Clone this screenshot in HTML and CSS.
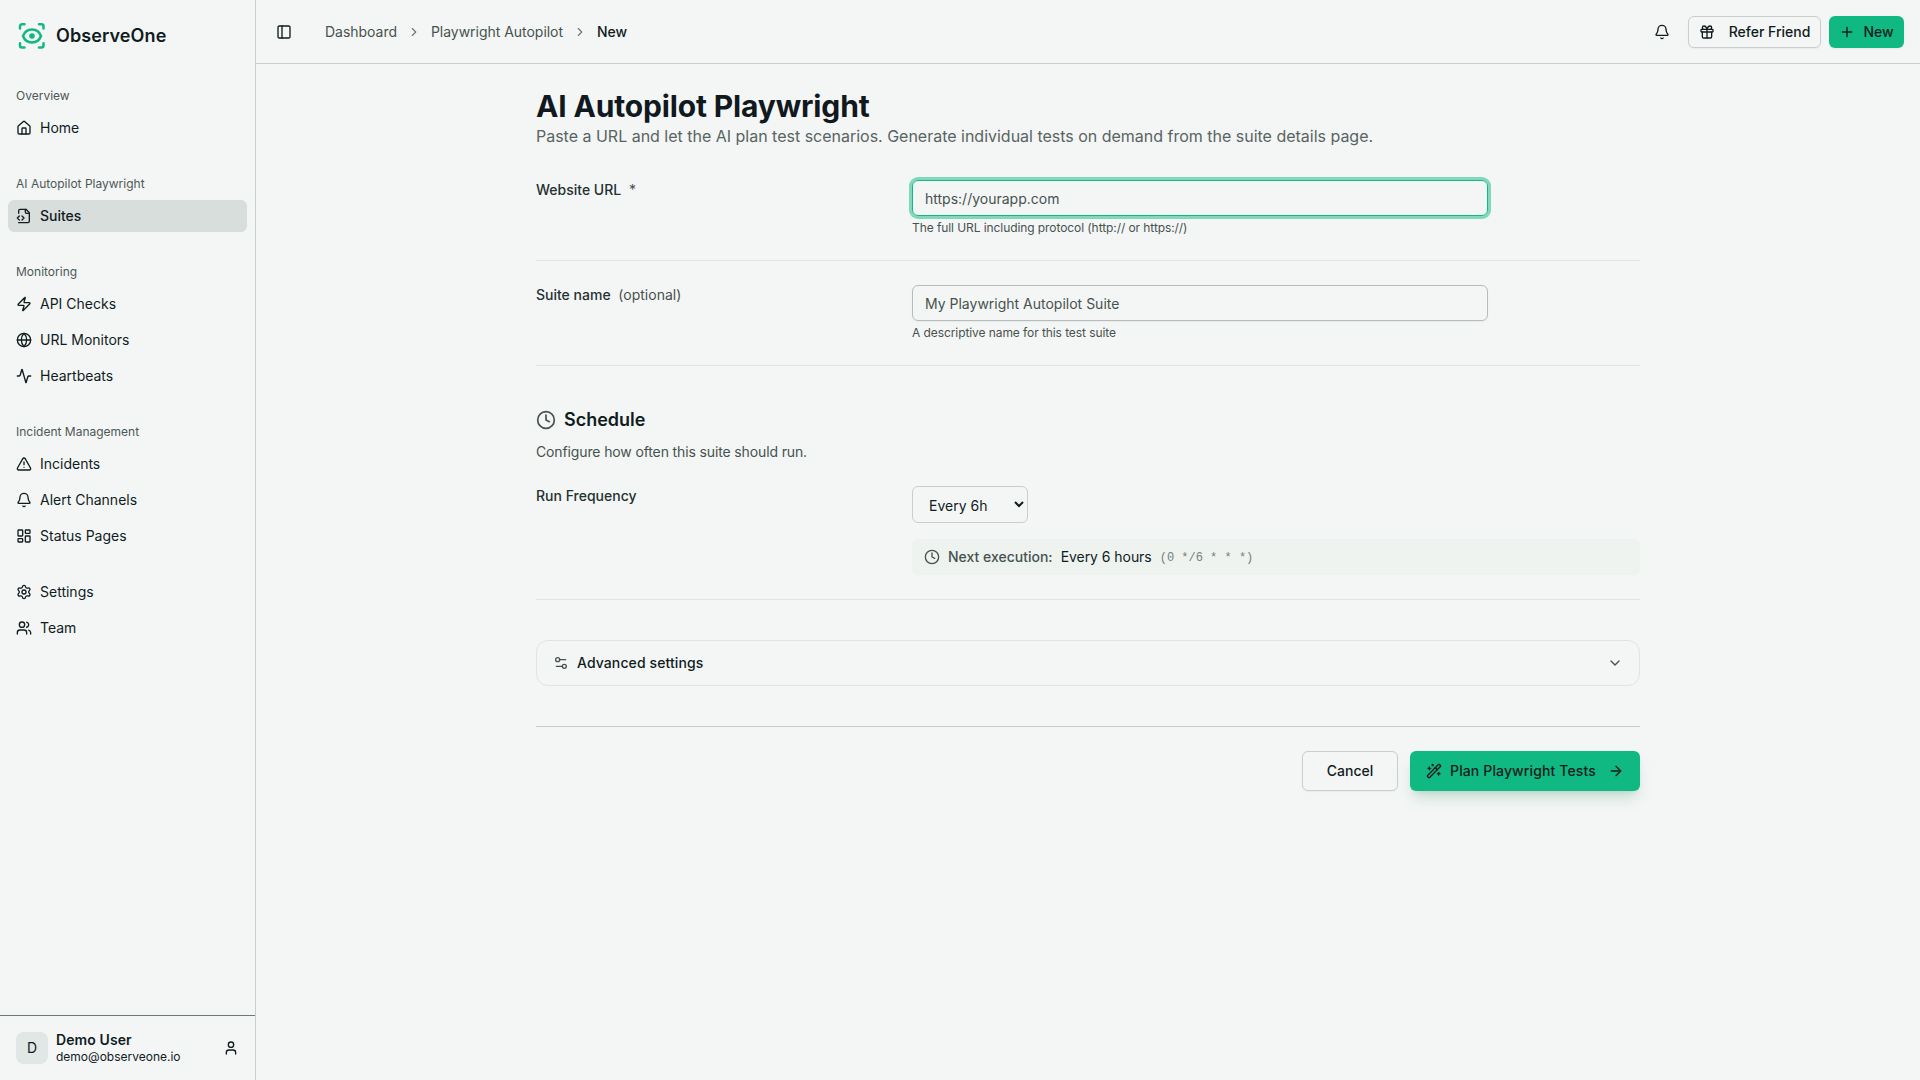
FILE: index.html
```html
<!DOCTYPE html>
<html lang="en">
<head>
  <meta charset="UTF-8" />
  <meta name="viewport" content="width=device-width, initial-scale=1.0"/>
  <title>New Playwright Autopilot Suite - ObserveOne</title>
  <link rel="stylesheet" href="styles.css">
</head>
<body>

  <div class="wrapper">
    <!-- Sidebar -->
    <aside class="sidebar">
      <a class="brand" href="#">
        <svg class="brand-logo" viewBox="0 0 32 32">
          <path d="M4 8.500V6.200a2 2 0 0 1 2-2h2.500M23 4.200h2.500a2 2 0 0 1 2 2v2.300M27.500 23.200v2.300a2 2 0 0 1-2 2H23M8.500 27.500H6a2 2 0 0 1-2-2v-2.300"/>
          <path d="M7 16c1.500-4 5-6.500 9-6.500s7.500 2.500 9 6.500c-1.500 4-5 6.500-9 6.500s-7.500-2.500-9-6.500z"/>
          <circle class="pupil" cx="16" cy="16" r="2.800"/>
        </svg>
        <span>ObserveOne</span>
      </a>

      <nav class="menu">
        <div class="group">
          <div class="group-label">Overview</div>
          <a class="item" href="#">
            <svg class="icon" viewBox="0 0 24 24"><path d="M15 21v-8a1 1 0 0 0-1-1h-4a1 1 0 0 0-1 1v8"/><path d="M3 10a2 2 0 0 1 .709-1.528l7-5.999a2 2 0 0 1 2.582 0l7 5.999A2 2 0 0 1 21 10v9a2 2 0 0 1-2 2H5a2 2 0 0 1-2-2z"/></svg>
            <span>Home</span>
          </a>
        </div>

        <div class="group">
          <div class="group-label">AI Autopilot Playwright</div>
          <a class="item active" href="#">
            <svg class="icon" viewBox="0 0 24 24"><path d="M4 22h14a2 2 0 0 0 2-2V7l-5-5H6a2 2 0 0 0-2 2v4"/><path d="M14 2v4a2 2 0 0 0 2 2h4"/><path d="m5 12-3 3 3 3"/><path d="m9 18 3-3-3-3"/></svg>
            <span>Suites</span>
          </a>
        </div>

        <div class="group">
          <div class="group-label">Monitoring</div>
          <a class="item" href="#">
            <svg class="icon" viewBox="0 0 24 24"><path d="M4 14a1 1 0 0 1-.78-1.630l9.900-10.200a.5.5 0 0 1 .86.460l-1.920 6.020A1 1 0 0 0 13 10h7a1 1 0 0 1 .78 1.630l-9.900 10.200a.5.5 0 0 1-.86-.460l1.920-6.020A1 1 0 0 0 11 14z"/></svg>
            <span>API Checks</span>
          </a>
          <a class="item" href="#">
            <svg class="icon" viewBox="0 0 24 24"><circle cx="12" cy="12" r="10"/><path d="M12 2a14.500 14.500 0 0 0 0 20 14.500 14.500 0 0 0 0-20"/><path d="M2 12h20"/></svg>
            <span>URL Monitors</span>
          </a>
          <a class="item" href="#">
            <svg class="icon" viewBox="0 0 24 24"><path d="M22 12h-2.480a2 2 0 0 0-1.930 1.460l-2.350 8.360a.25.25 0 0 1-.48 0L9.240 2.180a.25.25 0 0 0-.48 0l-2.350 8.360A2 2 0 0 1 4.490 12H2"/></svg>
            <span>Heartbeats</span>
          </a>
        </div>

        <div class="group">
          <div class="group-label">Incident Management</div>
          <a class="item" href="#">
            <svg class="icon" viewBox="0 0 24 24"><path d="m21.730 18-8-14a2 2 0 0 0-3.480 0l-8 14A2 2 0 0 0 4 21h16a2 2 0 0 0 1.730-3"/><path d="M12 9v4"/><path d="M12 17h.01"/></svg>
            <span>Incidents</span>
          </a>
          <a class="item" href="#">
            <svg class="icon" viewBox="0 0 24 24"><path d="M10.268 21a2 2 0 0 0 3.464 0"/><path d="M3.262 15.326A1 1 0 0 0 4 17h16a1 1 0 0 0 .74-1.673C19.410 13.956 18 12.499 18 8A6 6 0 0 0 6 8c0 4.499-1.411 5.956-2.738 7.326"/></svg>
            <span>Alert Channels</span>
          </a>
          <a class="item" href="#">
            <svg class="icon" viewBox="0 0 24 24"><rect width="7" height="9" x="3" y="3" rx="1"/><rect width="7" height="5" x="14" y="3" rx="1"/><rect width="7" height="9" x="14" y="12" rx="1"/><rect width="7" height="5" x="3" y="16" rx="1"/></svg>
            <span>Status Pages</span>
          </a>
        </div>

        <div class="group">
          <a class="item" href="#">
            <svg class="icon" viewBox="0 0 24 24"><path d="M9.671 4.136a2.340 2.340 0 0 1 4.659 0 2.340 2.340 0 0 0 3.319 1.915 2.340 2.340 0 0 1 2.330 4.033 2.340 2.340 0 0 0 0 3.831 2.340 2.340 0 0 1-2.330 4.033 2.340 2.340 0 0 0-3.319 1.915 2.340 2.340 0 0 1-4.659 0 2.340 2.340 0 0 0-3.320-1.915 2.340 2.340 0 0 1-2.330-4.033 2.340 2.340 0 0 0 0-3.831A2.340 2.340 0 0 1 6.350 6.051a2.340 2.340 0 0 0 3.319-1.915"/><circle cx="12" cy="12" r="3"/></svg>
            <span>Settings</span>
          </a>
          <a class="item" href="#">
            <svg class="icon" viewBox="0 0 24 24"><path d="M16 21v-2a4 4 0 0 0-4-4H6a4 4 0 0 0-4 4v2"/><circle cx="9" cy="7" r="4"/><path d="M22 21v-2a4 4 0 0 0-3-3.870"/><path d="M16 3.130a4 4 0 0 1 0 7.750"/></svg>
            <span>Team</span>
          </a>
        </div>
      </nav>

      <div class="user">
        <div class="avatar">D</div>
        <div class="user-info">
          <span class="user-name">Demo User</span>
          <span class="user-email">demo@observeone.io</span>
        </div>
        <svg class="icon" viewBox="0 0 24 24"><path d="M19 21v-2a4 4 0 0 0-4-4H9a4 4 0 0 0-4 4v2"/><circle cx="12" cy="7" r="4"/></svg>
      </div>
    </aside>

    <!-- Page -->
    <div class="page">
      <header class="topbar">
        <button class="icon-btn">
          <svg class="icon" viewBox="0 0 24 24"><rect width="18" height="18" x="3" y="3" rx="2"/><path d="M9 3v18"/></svg>
        </button>
        <nav class="breadcrumb">
          <a href="#">Dashboard</a>
          <svg class="icon small" viewBox="0 0 24 24"><path d="m9 18 6-6-6-6"/></svg>
          <a href="#">Playwright Autopilot</a>
          <svg class="icon small" viewBox="0 0 24 24"><path d="m9 18 6-6-6-6"/></svg>
          <span class="current">New</span>
        </nav>
        <div class="actions">
          <button class="icon-btn">
            <svg class="icon" viewBox="0 0 24 24"><path d="M10.268 21a2 2 0 0 0 3.464 0"/><path d="M3.262 15.326A1 1 0 0 0 4 17h16a1 1 0 0 0 .74-1.673C19.410 13.956 18 12.499 18 8A6 6 0 0 0 6 8c0 4.499-1.411 5.956-2.738 7.326"/></svg>
          </button>
          <button class="btn refer">
            <svg class="icon" viewBox="0 0 24 24"><rect x="3" y="8" width="18" height="4" rx="1"/><path d="M12 8v13"/><path d="M19 12v7a2 2 0 0 1-2 2H7a2 2 0 0 1-2-2v-7"/><path d="M7.500 8a2.500 2.500 0 0 1 0-5A4.800 8 0 0 1 12 8a4.800 8 0 0 1 4.500-5 2.500 2.500 0 0 1 0 5"/></svg>
            Refer Friend
          </button>
          <button class="btn primary new">
            <svg class="icon" viewBox="0 0 24 24"><path d="M5 12h14"/><path d="M12 5v14"/></svg>
            New
          </button>
        </div>
      </header>

      <main class="container">
        <h1>AI Autopilot Playwright</h1>
        <p class="intro">Paste a URL and let the AI plan test scenarios. Generate individual tests on demand from the suite details page.</p>

        <form>
          <div class="row">
            <label for="url">Website URL <span class="note">*</span></label>
            <div class="field">
              <input class="focused" type="text" id="url" placeholder="https://yourapp.com">
              <p class="hint">The full URL including protocol (http:// or https://)</p>
            </div>
          </div>

          <div class="row">
            <label for="name">Suite name <span class="note">(optional)</span></label>
            <div class="field">
              <input type="text" id="name" placeholder="My Playwright Autopilot Suite">
              <p class="hint">A descriptive name for this test suite</p>
            </div>
          </div>

          <section class="schedule">
            <h2>
              <svg class="icon large" viewBox="0 0 24 24"><circle cx="12" cy="12" r="10"/><path d="M12 6v6l4 2"/></svg>
              Schedule
            </h2>
            <p class="section-text">Configure how often this suite should run.</p>
            <div class="row">
              <label for="frequency">Run Frequency</label>
              <div class="field">
                <select id="frequency">
                  <option>Every 6h</option>
                </select>
                <div class="next-run">
                  <svg class="icon" viewBox="0 0 24 24"><circle cx="12" cy="12" r="10"/><path d="M12 6v6l4 2"/></svg>
                  <span class="next-label">Next execution:</span>
                  <span class="next-value">Every 6 hours</span>
                  <code>(0 */6 * * *)</code>
                </div>
              </div>
            </div>
          </section>

          <button type="button" class="advanced">
            <svg class="icon" viewBox="0 0 24 24"><path d="M14 17H5"/><path d="M19 7h-9"/><circle cx="17" cy="17" r="3"/><circle cx="7" cy="7" r="3"/></svg>
            <span>Advanced settings</span>
            <svg class="icon chevron" viewBox="0 0 24 24"><path d="m6 9 6 6 6-6"/></svg>
          </button>

          <div class="form-footer">
            <button type="button" class="btn cancel">Cancel</button>
            <button type="button" class="btn primary submit">
              <svg class="icon" viewBox="0 0 24 24"><path d="m21.640 3.640-1.280-1.280a1.210 1.210 0 0 0-1.720 0L2.360 18.640a1.210 1.210 0 0 0 0 1.720l1.280 1.280a1.200 1.200 0 0 0 1.720 0L21.640 5.360a1.200 1.200 0 0 0 0-1.720"/><path d="m14 7 3 3"/><path d="M5 6v4"/><path d="M19 14v4"/><path d="M10 2v2"/><path d="M7 8H3"/><path d="M21 16h-4"/><path d="M11 3H9"/></svg>
              <span>Plan Playwright Tests</span>
              <svg class="icon" viewBox="0 0 24 24"><path d="M5 12h14"/><path d="m12 5 7 7-7 7"/></svg>
            </button>
          </div>
        </form>
      </main>
    </div>
  </div>

</body>
</html>
```

FILE: styles.css
```css
* {
  box-sizing: border-box;
}

html, body {
  margin: 0;
  padding: 0;
  height: 100%;
  font-family: Inter, sans-serif;
  font-size: 14px;
  line-height: 20px;
  color: #101c1e;
  background-color: #f4f6f5;
}

h1, h2, p {
  margin: 0;
}

a {
  color: inherit;
  text-decoration: none;
}

button, input, select {
  font: inherit;
  color: inherit;
}

.wrapper {
  display: flex;
  height: 100vh;
}

/* Icons */
.icon {
  width: 16px;
  height: 16px;
  flex-shrink: 0;
  fill: none;
  stroke: currentColor;
  stroke-width: 2;
  stroke-linecap: round;
  stroke-linejoin: round;
}
.icon.small {
  width: 14px;
  height: 14px;
}
.icon.large {
  width: 20px;
  height: 20px;
}

/* Sidebar */
.sidebar {
  display: flex;
  flex-direction: column;
  width: 256px;
  flex-shrink: 0;
  border-right: 1px solid #c8cecc;
}
.brand {
  display: flex;
  align-items: center;
  gap: 8px;
  height: 72px;
  padding: 0 16px;
  font-size: 18px;
  font-weight: 600;
  letter-spacing: 0.1px;
}
.brand-logo {
  width: 32px;
  height: 32px;
  fill: none;
  stroke: #10b981;
  stroke-width: 2.500;
  stroke-linecap: round;
}
.brand-logo .pupil {
  fill: #10b981;
  stroke: none;
}
.menu {
  display: flex;
  flex-direction: column;
  gap: 8px;
  flex: 1;
}
.group {
  display: flex;
  flex-direction: column;
  gap: 4px;
  padding: 8px;
}
.group-label {
  height: 32px;
  margin-bottom: -4px;
  padding: 0 8px;
  font-size: 12px;
  line-height: 32px;
  color: #4c5856;
}
.item {
  display: flex;
  align-items: center;
  gap: 8px;
  height: 32px;
  padding: 0 8px;
  border-radius: 6px;
}
.item.active {
  background-color: #d8dedb;
  font-weight: 500;
}
.user {
  display: flex;
  align-items: center;
  gap: 8px;
  height: 65px;
  padding: 0 16px;
  border-top: 1px solid #6b7a72;
}
.avatar {
  width: 32px;
  height: 32px;
  border-radius: 8px;
  background-color: #e0e7e4;
  line-height: 32px;
  text-align: center;
}
.user-info {
  display: flex;
  flex-direction: column;
  flex: 1;
}
.user-name {
  font-weight: 600;
  line-height: 18px;
  letter-spacing: 0.1px;
}
.user-email {
  font-size: 12px;
  line-height: 16px;
}

/* Top bar */
.page {
  flex: 1;
}
.topbar {
  display: flex;
  align-items: center;
  height: 64px;
  padding: 0 16px 0 14px;
  border-bottom: 1px solid #c8cecc;
}
.icon-btn {
  display: flex;
  align-items: center;
  justify-content: center;
  width: 28px;
  height: 28px;
  padding: 0;
  border: none;
  background: none;
}
.breadcrumb {
  display: flex;
  align-items: center;
  gap: 10px;
  margin-left: 27px;
  color: #46524f;
  letter-spacing: -0.03px;
}
.breadcrumb .icon {
  color: #6b7673;
}
.breadcrumb .current {
  color: #101c1e;
  font-weight: 500;
}
.actions {
  display: flex;
  align-items: center;
  gap: 8px;
  margin-left: auto;
}
.actions .icon-btn {
  margin-right: 4px;
}

/* Buttons */
.btn {
  display: flex;
  align-items: center;
  justify-content: center;
  gap: 8px;
  height: 40px;
  padding: 0 24px;
  border: 1px solid #c8cecc;
  border-radius: 6px;
  background-color: #f4f6f5;
  box-shadow: 0 1px 2px rgba(16, 60, 45, 0.06);
  font-weight: 500;
}
.btn.primary {
  border: none;
  background-color: #10b981;
  color: #101c1e;
}
.btn.refer {
  width: 133px;
  height: 32px;
  padding: 0;
  gap: 14px;
}
.btn.new {
  width: 75px;
  height: 32px;
  padding: 0;
}
.btn.cancel {
  width: 96px;
  padding: 0;
}
.btn.submit {
  width: 230px;
  padding: 0;
  box-shadow: 0 10px 15px -3px rgba(16, 120, 85, 0.18), 0 4px 6px -4px rgba(16, 120, 85, 0.2);
}
.btn.submit span {
  margin-right: 4px;
  letter-spacing: 0.13px;
}

/* Form */
.container {
  max-width: 1152px;
  margin: 0 auto;
  padding: 24px;
}
h1 {
  font-size: 30px;
  line-height: 36px;
  font-weight: 700;
  letter-spacing: -0.15px;
  color: #101820;
}
.intro {
  margin-bottom: 32px;
  font-size: 16px;
  line-height: 24px;
  letter-spacing: -0.01px;
  color: #586462;
}
.row {
  display: grid;
  grid-template-columns: 352px 1fr;
  column-gap: 24px;
  margin-bottom: 24px;
  padding-bottom: 24px;
  border-bottom: 1px solid #dde4e1;
}
label {
  font-weight: 500;
  color: #24312f;
}
.note {
  margin-left: 4px;
  font-weight: 400;
  color: #46524f;
}
input {
  display: block;
  width: 576px;
  height: 36px;
  padding: 0 12px;
  border: 1px solid #b3bdb9;
  border-radius: 6px;
  background: transparent;
  box-shadow: 0 1px 2px rgba(16, 60, 45, 0.06);
}
input::placeholder {
  color: #46524f;
}
input.focused {
  border-color: #10b981;
  box-shadow: 0 0 0 3px rgba(16, 185, 129, 0.5);
}
.hint {
  margin-top: 4px;
  font-size: 12px;
  line-height: 16px;
  letter-spacing: -0.08px;
  color: #46524f;
}

/* Schedule */
.schedule {
  padding-top: 16px;
}
h2 {
  display: flex;
  align-items: center;
  gap: 8px;
  font-size: 18px;
  line-height: 28px;
  font-weight: 600;
}
h2 .icon {
  color: #46524f;
}
.section-text {
  margin: 8px 0 24px;
  letter-spacing: -0.13px;
  color: #46524f;
}
select {
  display: block;
  width: 116px;
  height: 37px;
  padding: 1px 0 0 12px;
  border: 1px solid #c8cecc;
  border-radius: 6px;
  background-color: #f4f6f5;
}
.next-run {
  display: flex;
  align-items: center;
  gap: 8px;
  height: 36px;
  margin-top: 16px;
  padding: 0 12px;
  border-radius: 6px;
  background-color: #eef3f0;
  color: #46524f;
}
.next-label {
  font-weight: 500;
}
.next-value {
  color: #101c1e;
  letter-spacing: -0.05px;
}
.next-run code {
  padding-top: 1px;
  font-family: "Liberation Mono", monospace;
  font-size: 12px;
  color: #75807d;
}

/* Advanced settings */
.advanced {
  display: flex;
  align-items: center;
  gap: 8px;
  width: 100%;
  height: 46px;
  margin: 40px 0;
  padding: 0 16px;
  border: 1px solid #dde4e1;
  border-radius: 12px;
  background: none;
  font-weight: 500;
  letter-spacing: 0.1px;
}
.advanced .icon {
  color: #46524f;
}
.advanced .chevron {
  margin-left: auto;
}
.form-footer {
  display: flex;
  justify-content: flex-end;
  gap: 12px;
  padding-top: 24px;
  border-top: 1px solid #c8cecc;
}
```
